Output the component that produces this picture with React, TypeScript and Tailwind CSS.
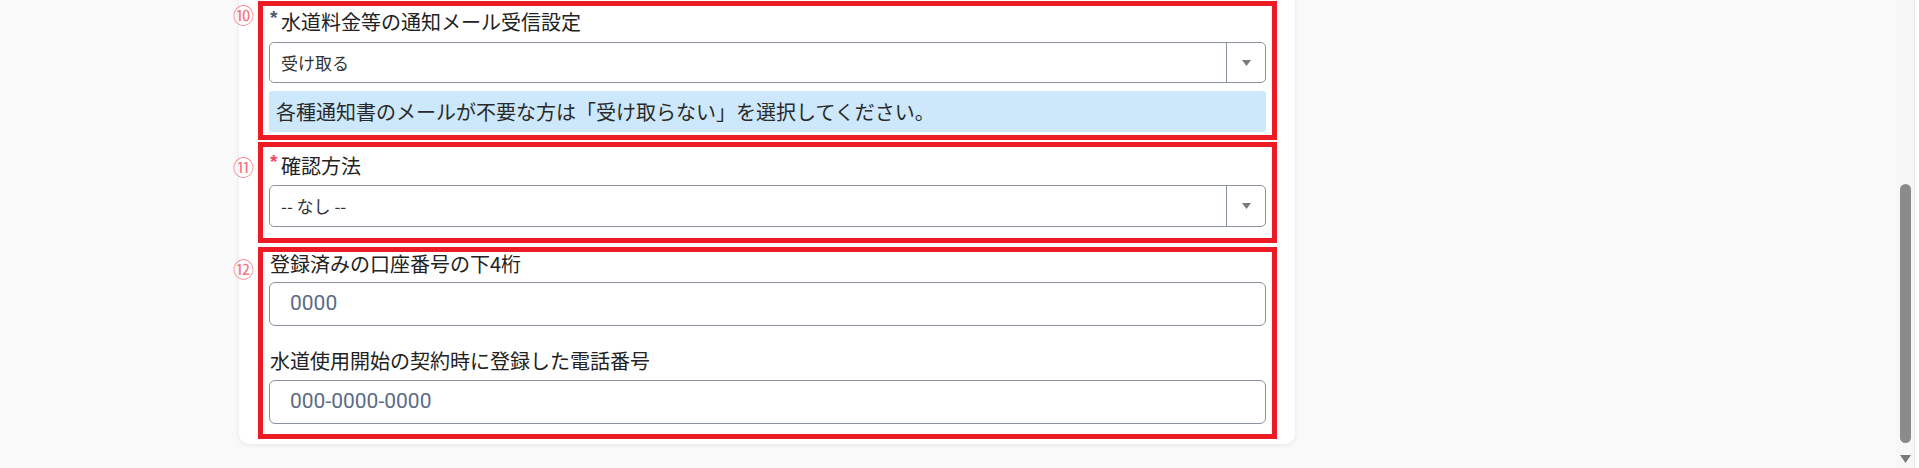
import React from "react";

const JP = { fontFamily: "'Noto Sans CJK JP', 'Noto Sans', sans-serif" };
const NUM = { fontFamily: "Roboto, 'Noto Sans CJK JP', sans-serif" };

function Arrow() {
  return (
    <svg width="9" height="6" viewBox="0 0 9 6">
      <polygon points="0,0 9,0 4.5,6" fill="#7b7b7b" />
    </svg>
  );
}

function Select({ value, h }: { value: string; h: string }) {
  return (
    <div className={`flex ${h} border border-[#8a929e] rounded-[5px] bg-white`}>
      <div className="flex-1 flex items-center pl-[11px] text-[17px] text-[#333]">{value}</div>
      <div className="w-[39px] border-l border-[#8a929e] flex items-center justify-center">
        <Arrow />
      </div>
    </div>
  );
}

function Input({ placeholder }: { placeholder: string }) {
  return (
    <div className="flex items-center h-[44px] border border-[#8a929e] rounded-[6px] bg-white pl-[20px]">
      <span className="text-[21px] text-[#5b6b86]" style={NUM}>
        {placeholder}
      </span>
    </div>
  );
}

function Circle({ n, top }: { n: string; top: string }) {
  return (
    <span
      className={`absolute left-[-30px] ${top} text-[21px] leading-[21px] text-[#f4777f]`}
      style={{ fontFamily: "'Noto Sans CJK JP', sans-serif" }}
    >
      {n}
    </span>
  );
}

function Star({ color }: { color: string }) {
  return (
    <span
      className={`w-[11px] self-start text-[19px] leading-[16px] font-bold ${color}`}
      style={{ fontFamily: "'Liberation Sans', sans-serif" }}
    >
      *
    </span>
  );
}

export default function App() {
  return (
    <div className="flex w-[1919px] h-[468px] overflow-hidden bg-[#f9f9f9]" style={JP}>
      <div className="flex-1">
        <div className="ml-[239px] w-[1056px] -mt-5 pt-[21px] pb-[5px] pl-[19px] pr-[18px] bg-white rounded-[10px] shadow-[0_1px_5px_rgba(0,0,0,0.08)]">
          {/* Box 1 */}
          <div className="relative border-[5px] border-[#ed1c24] px-[6px] pt-[4px] pb-[3px]">
            <Circle n="⑩" top="top-[-2px]" />
            <div className="flex h-[24px] items-center pl-[1px] text-[20px] text-[#222]">
              <Star color="text-[#4a5a70]" />
              <span>水道料金等の通知メール受信設定</span>
            </div>
            <div className="mt-[8px]">
              <Select value="受け取る" h="h-[41px]" />
            </div>
            <div className="mt-[8px] h-[41px] flex items-center pl-[7px] bg-[#cce8fa] rounded-[3px] text-[20px] text-[#2a2a2a]">
              各種通知書のメールが不要な方は「受け取らない」を選択してください。
            </div>
          </div>

          {/* Box 2 */}
          <div className="relative mt-[2px] border-[5px] border-[#ed1c24] px-[6px] pt-[7px] pb-[11px]">
            <Circle n="⑪" top="top-[9px]" />
            <div className="flex h-[24px] items-center pl-[1px] text-[20px] text-[#222]">
              <Star color="text-[#ef4a66]" />
              <span>確認方法</span>
            </div>
            <div className="mt-[7px]">
              <Select value="-- なし --" h="h-[42px]" />
            </div>
          </div>

          {/* Box 3 */}
          <div className="relative mt-[4px] border-[5px] border-[#ed1c24] px-[6px] pt-0 pb-[10px]">
            <Circle n="⑫" top="top-[6px]" />
            <div className="flex h-[24px] items-center pl-[1px] text-[20px] text-[#222]">
              登録済みの口座番号の下4桁
            </div>
            <div className="mt-[6px]">
              <Input placeholder="0000" />
            </div>
            <div className="mt-[23px] flex h-[24px] items-center pl-[1px] text-[20px] text-[#222]">
              水道使用開始の契約時に登録した電話番号
            </div>
            <div className="mt-[7px]">
              <Input placeholder="000-0000-0000" />
            </div>
          </div>
        </div>
      </div>

      {/* Scrollbar */}
      <div className="flex w-[23px] h-full">
        <div className="w-[19px] h-full bg-[#f7f7f7] border-r border-[#e6e6e6] flex flex-col items-center">
          <div className="h-[184px]" />
          <div className="w-[11px] h-[259px] rounded-full bg-[#8b8b8b]" />
          <div className="mt-[12px]">
            <svg width="11" height="8" viewBox="0 0 11 8">
              <polygon points="0,0 11,0 5.5,8" fill="#7a7a7a" />
            </svg>
          </div>
        </div>
        <div className="flex-1 bg-white" />
      </div>
    </div>
  );
}
